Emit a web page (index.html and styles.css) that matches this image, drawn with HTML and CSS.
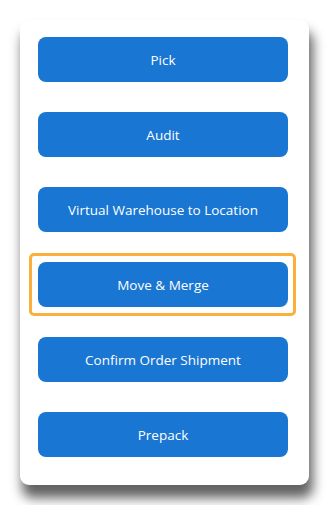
FILE: index.html
```html
<!DOCTYPE html>
<html lang="en">
<head>
  <meta charset="UTF-8" />
  <title>Tasks</title>
  <link rel="stylesheet" href="styles.css">
</head>
<body>
  <div class="card">
    <button class="task-btn">Pick</button>
    <button class="task-btn">Audit</button>
    <button class="task-btn">Virtual Warehouse to Location</button>
    <button class="task-btn focused">Move &amp; Merge</button>
    <button class="task-btn">Confirm Order Shipment</button>
    <button class="task-btn">Prepack</button>
  </div>
</body>
</html>
```

FILE: styles.css
```css
* {
  margin: 0;
  padding: 0;
  box-sizing: border-box;
}

html, body {
  background: #ffffff;
  font-family: 'Open Sans', 'Noto Sans', sans-serif;
}

body {
  padding: 20px;
}

.card {
  width: 289px;
  height: 465px;
  background: #fff;
  border-radius: 9px;
  box-shadow: 3px 12px 12px 1px rgba(0, 0, 0, 0.62);
  padding: 17px 21px 0 18px;
  display: flex;
  flex-direction: column;
  gap: 30px;
}

.task-btn {
  position: relative;
  width: 250px;
  height: 45px;
  background: #1976d2;
  color: #fff;
  border: none;
  border-radius: 8px;
  font-family: inherit;
  font-size: 13.5px;
  cursor: pointer;
}

/* focus ring drawn with tighter corners than the button */
.task-btn.focused::after {
  content: "";
  position: absolute;
  top: -9px;
  left: -9px;
  right: -8px;
  bottom: -9px;
  border: 3px solid #fbb03b;
  border-radius: 5px;
}
```
